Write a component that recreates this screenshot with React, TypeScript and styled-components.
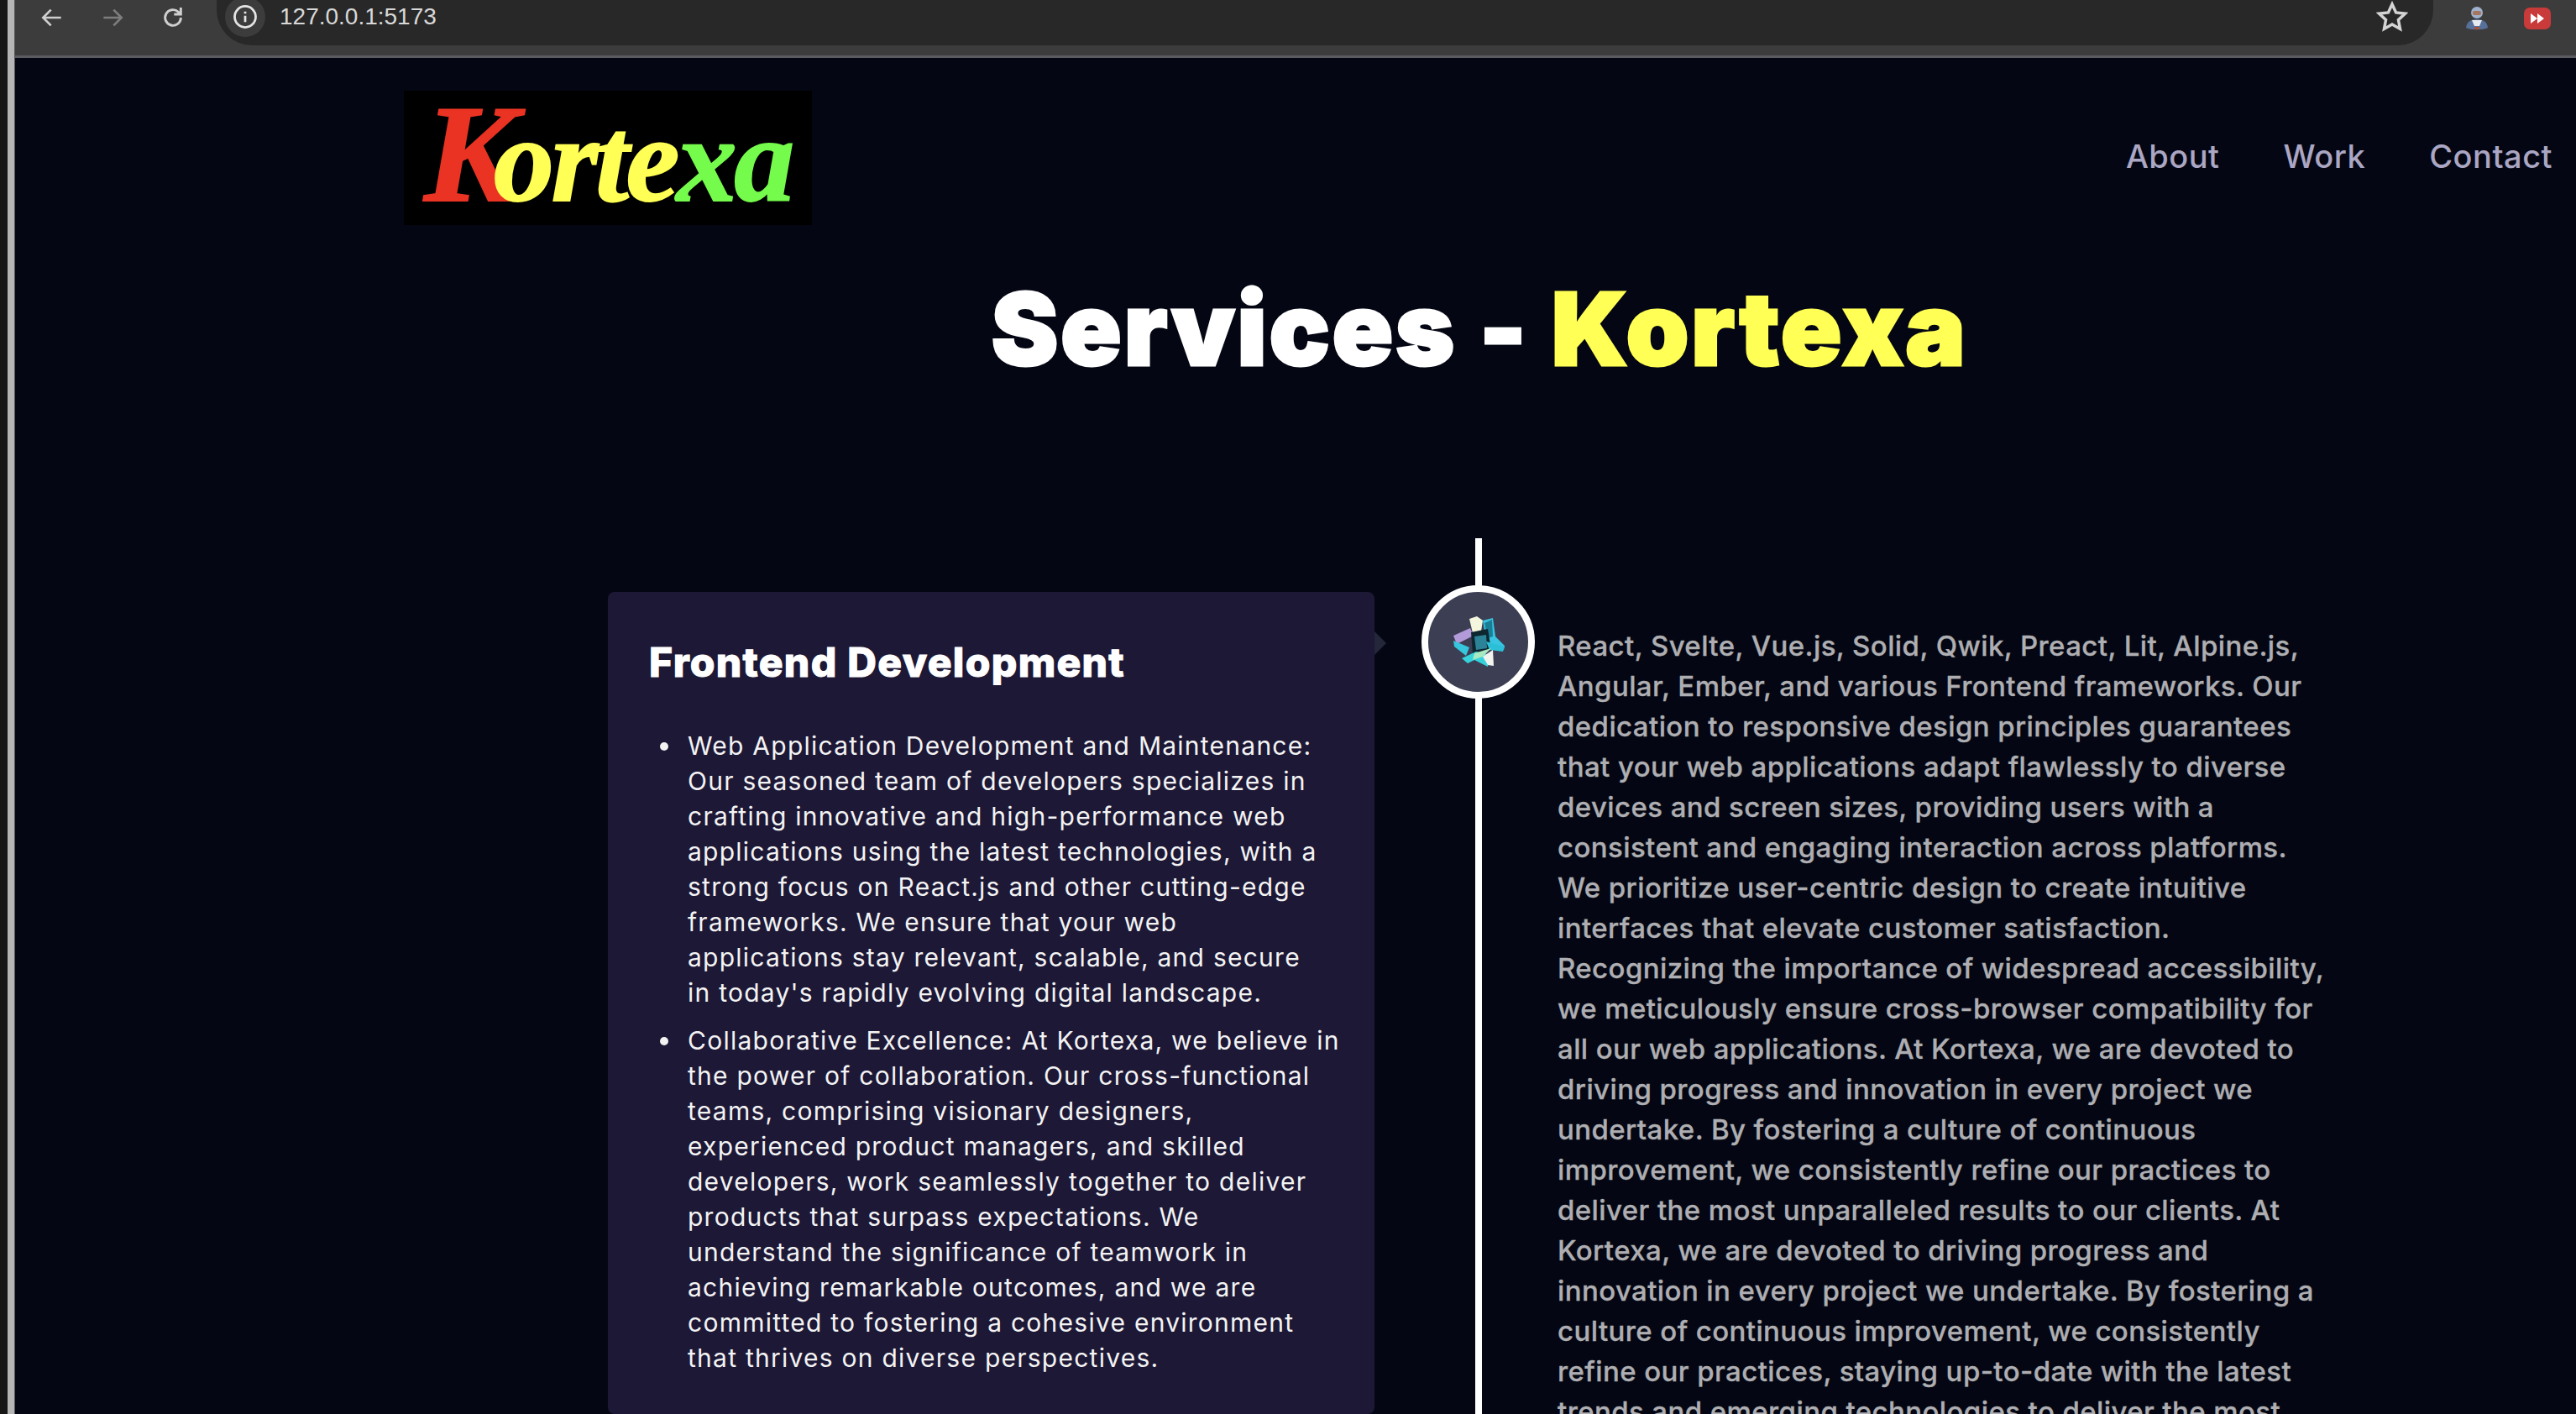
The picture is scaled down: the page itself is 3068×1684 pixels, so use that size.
import React from "react";
import styled, { createGlobalStyle } from "styled-components";

const Global = createGlobalStyle`
  html, body { margin: 0; padding: 0; background: #040713; overflow: hidden; }
  body { width: 3068px; height: 1684px; font-family: "Inter", "Liberation Sans", sans-serif; }
`;
const Screen = styled.div`display: flex; width: 3068px; height: 1684px; overflow: hidden;`;
const WindowEdge = styled.div`flex: 0 0 18px; background: linear-gradient(90deg, #161616 0, #161616 9px, #b5b5b5 9px, #b5b5b5 17px, #555 17px);`;
const Window = styled.div`flex: 1; min-width: 0; display: flex; flex-direction: column;`;
const Chrome = styled.div`flex: 0 0 66px; display: flex; align-items: flex-start; background: #3c3c3c; border-bottom: 3px solid #5a5c60; box-sizing: content-box; height: 66px;`;
const NavIcons = styled.div`display: flex; gap: 40px; padding: 5px 0 0 28px; color: #cfcfcf; flex: 0 0 240px; box-sizing: border-box;`;
const Address = styled.div`flex: 0 0 2640px; height: 54px; background: #282828; border-radius: 0 0 42px 42px; display: flex; align-items: center; justify-content: space-between; padding: 0 30px 14px 10px; box-sizing: border-box; color: #d8d8d8; font-size: 28px; font-family: "Liberation Sans", sans-serif;`;
const InfoWrap = styled.span`display: flex; align-items: center; gap: 17px;`;
const InfoDot = styled.span`display: flex; align-items: center; justify-content: center; width: 48px; height: 48px; border-radius: 50%; background: #3c3c3c;`;
const Extensions = styled.div`display: flex; gap: 42px; align-items: center; padding: 7px 0 0 38px;`;
const Main = styled.div`flex: 1; min-height: 0; overflow: hidden; display: flex; flex-direction: column;`;
const Header = styled.header`display: flex; justify-content: space-between; align-items: center; padding: 39px 28px 0 463px;`;
const Logo = styled.div`width: 486px; height: 160px; background: #000; display: flex; align-items: center; justify-content: center; padding-bottom: 10px; box-sizing: border-box;`;
const LogoWord = styled.span`font-family: "Liberation Serif", serif; font-weight: 700; font-style: italic; font-size: 144px; letter-spacing: -3.5px; line-height: 1; display: inline-block; -webkit-text-stroke: 2px; white-space: nowrap;`;
const LogoPart = styled.span<{ $c: string; $big?: boolean }>`color: ${p => p.$c}; ${p => p.$big && "font-size: 166px; letter-spacing: -28px;"}`;
const Nav = styled.nav`display: flex; gap: 76px; padding-bottom: 4px;`;
const NavLink = styled.a`font-size: 38px; font-weight: 500; color: #aaa6c3; letter-spacing: 0.5px;`;
const Title = styled.h1`margin: 64px 0 0; font-size: 120px; line-height: 1; font-weight: 900; color: #fff; text-align: center; letter-spacing: 2.6px; padding-left: 438px; -webkit-text-stroke: 3px;`;
const Accent = styled.span`color: #ffff55;`;
const Timeline = styled.section`margin-top: 189px; display: grid; grid-template-columns: 913px 56px 135px 27px 1fr; padding-left: 706px; position: relative;`;
const Card = styled.article`position: relative; margin-top: 64px; background: #1d1836; border-radius: 8px; padding: 49px 40px 0 49px; height: 979px; box-sizing: border-box;`;
const Arrow = styled.span`position: absolute; left: 100%; top: 47px; border-left: 14px solid #24263a; border-top: 14px solid transparent; border-bottom: 14px solid transparent;`;
const CardTitle = styled.h3`margin: 0; font-size: 48px; line-height: 70px; font-weight: 800; color: #fff; letter-spacing: 1.3px; -webkit-text-stroke: 1px;`;
const Points = styled.ul`margin: 43px 0 0; padding: 0 0 0 46px; list-style: none; color: #f3f3f3; font-size: 30px; line-height: 42px; letter-spacing: 1.25px; white-space: nowrap;`;
const Point = styled.li`position: relative; margin-bottom: 15px; &::before { content: ""; position: absolute; left: -33px; top: 17px; width: 10px; height: 10px; border-radius: 50%; background: #f3f3f3; }`;
const Rail = styled.div`grid-column: 3; position: relative; display: flex; flex-direction: column; align-items: center; height: 1100px;`;
const RailLine = styled.span`position: absolute; top: 0; bottom: 0; left: 64px; width: 8px; background: #fff;`;
const Badge = styled.div`position: relative; margin-top: 56px; width: 135px; height: 135px; box-sizing: border-box; border: 8px solid #fff; border-radius: 50%; background: #3c3e54; display: flex; align-items: center; justify-content: center;`;
const Blurb = styled.p`grid-column: 5; margin: 104px 0 0; font-size: 33px; line-height: 48px; font-weight: 500; color: #aeaeb2; white-space: nowrap; letter-spacing: 0.4px; -webkit-text-stroke: 0.3px;`;

const Cube = () => (
  <svg width="62" height="62" viewBox="0 0 62 62">
    <polygon points="20,3 29,0 36,5 34,18 24,20" fill="#f4f7dd" />
    <polygon points="1,23 21,14 25,23 5,33" fill="#b39ad8" />
    <polygon points="1,29 20,37 16,47 2,36" fill="#36c6dd" />
    <polygon points="36,5 48,2 51,24 62,35 61,40 40,30" fill="#38c5e2" />
    <polygon points="38,8 47,4 48,24 42,26" fill="#1a7f96" />
    <polygon points="22,19 42,15 46,40 24,44" fill="#0d2630" />
    <polygon points="26,24 40,22 41,38 28,40" fill="#2c8296" />
    <polygon points="40,30 62,36 60,42 44,40" fill="#2cc0d8" />
    <polygon points="11,50 28,42 44,46 42,60 26,52 18,56" fill="#36d2dc" />
    <polygon points="26,44 46,38 36,48 24,52" fill="#a9e8c0" />
    <polygon points="36,48 48,40 49,59 42,58" fill="#f2f3ee" />
  </svg>
);

const Back = ({ dim }: { dim?: boolean }) => (
  <svg width="32" height="32" viewBox="0 0 24 24" fill="none" stroke={dim ? "#7d7d7d" : "#cfcfcf"} strokeWidth="2">
    <path d={dim ? "M4 12h16M13 5l7 7-7 7" : "M20 12H4M11 5l-7 7 7 7"} />
  </svg>
);
const Reload = () => (
  <svg width="32" height="32" viewBox="0 0 24 24" fill="none" stroke="#cfcfcf" strokeWidth="2.2">
    <path d="M19 12a7 7 0 1 1-2.2-5.1L19 9M19 3v6h-6" />
  </svg>
);
const Info = () => (
  <svg width="30" height="30" viewBox="0 0 24 24" fill="none" stroke="#e4e4e4" strokeWidth="2.2">
    <circle cx="12" cy="12" r="10" />
    <path d="M12 11v6M12 7v2" />
  </svg>
);
const Star = () => (
  <svg width="38" height="38" viewBox="0 0 24 24" fill="none" stroke="#d4d4d4" strokeWidth="2.2">
    <path d="M12 2.5l2.9 6.3 6.8.8-5 4.7 1.3 6.8-6-3.4-6 3.4 1.3-6.8-5-4.7 6.8-.8z" />
  </svg>
);
const Avatar = () => (
  <svg width="28" height="30" viewBox="0 0 28 30">
    <circle cx="14" cy="8" r="7" fill="#9fb1cc" />
    <rect x="9" y="6" width="10" height="5" rx="2" fill="#a5765f" />
    <path d="M1 26c1-8 7-10 13-10s12 2 13 10c-4 3-22 3-26 0z" fill="#56709a" />
    <path d="M8 17h12l-3 7h-6z" fill="#e6eaf0" />
    <rect x="11" y="25" width="6" height="3" fill="#a5533f" />
  </svg>
);
const Forward = () => (
  <svg width="32" height="26" viewBox="0 0 32 26">
    <rect width="32" height="26" rx="7" fill="#c93a3a" />
    <path d="M8 7l8 6-8 6zM16 7l8 6-8 6z" fill="#fff" />
  </svg>
);

const App = () => (
  <Screen>
    <Global />
    <WindowEdge />
    <Window>
      <Chrome>
        <NavIcons><Back /><Back dim /><Reload /></NavIcons>
        <Address>
          <InfoWrap><InfoDot><Info /></InfoDot>127.0.0.1:5173</InfoWrap>
          <Star />
        </Address>
        <Extensions><Avatar /><Forward /></Extensions>
      </Chrome>
      <Main>
        <Header>
          <Logo>
            <LogoWord>
              <LogoPart $c="#ea3323" $big>K</LogoPart><LogoPart $c="#ffff55">orte</LogoPart><LogoPart $c="#75fb4c">xa</LogoPart>
            </LogoWord>
          </Logo>
          <Nav><NavLink>About</NavLink><NavLink>Work</NavLink><NavLink>Contact</NavLink></Nav>
        </Header>
        <Title>Services - <Accent>Kortexa</Accent></Title>
        <Timeline>
          <Card>
            <Arrow />
            <CardTitle>Frontend Development</CardTitle>
            <Points>
              <Point>Web Application Development and Maintenance:<br />Our seasoned team of developers specializes in<br />crafting innovative and high-performance web<br />applications using the latest technologies, with a<br />strong focus on React.js and other cutting-edge<br />frameworks. We ensure that your web<br />applications stay relevant, scalable, and secure<br />in today's rapidly evolving digital landscape.</Point>
              <Point>Collaborative Excellence: At Kortexa, we believe in<br />the power of collaboration. Our cross-functional<br />teams, comprising visionary designers,<br />experienced product managers, and skilled<br />developers, work seamlessly together to deliver<br />products that surpass expectations. We<br />understand the significance of teamwork in<br />achieving remarkable outcomes, and we are<br />committed to fostering a cohesive environment<br />that thrives on diverse perspectives.</Point>
            </Points>
          </Card>
          <Rail>
            <RailLine />
            <Badge><Cube /></Badge>
          </Rail>
          <Blurb>
            React, Svelte, Vue.js, Solid, Qwik, Preact, Lit, Alpine.js,<br />Angular, Ember, and various Frontend frameworks. Our<br />dedication to responsive design principles guarantees<br />that your web applications adapt flawlessly to diverse<br />devices and screen sizes, providing users with a<br />consistent and engaging interaction across platforms.<br />We prioritize user-centric design to create intuitive<br />interfaces that elevate customer satisfaction.<br />Recognizing the importance of widespread accessibility,<br />we meticulously ensure cross-browser compatibility for<br />all our web applications. At Kortexa, we are devoted to<br />driving progress and innovation in every project we<br />undertake. By fostering a culture of continuous<br />improvement, we consistently refine our practices to<br />deliver the most unparalleled results to our clients. At<br />Kortexa, we are devoted to driving progress and<br />innovation in every project we undertake. By fostering a<br />culture of continuous improvement, we consistently<br />refine our practices, staying up-to-date with the latest<br />trends and emerging technologies to deliver the most
          </Blurb>
        </Timeline>
      </Main>
    </Window>
  </Screen>
);
export default App;
